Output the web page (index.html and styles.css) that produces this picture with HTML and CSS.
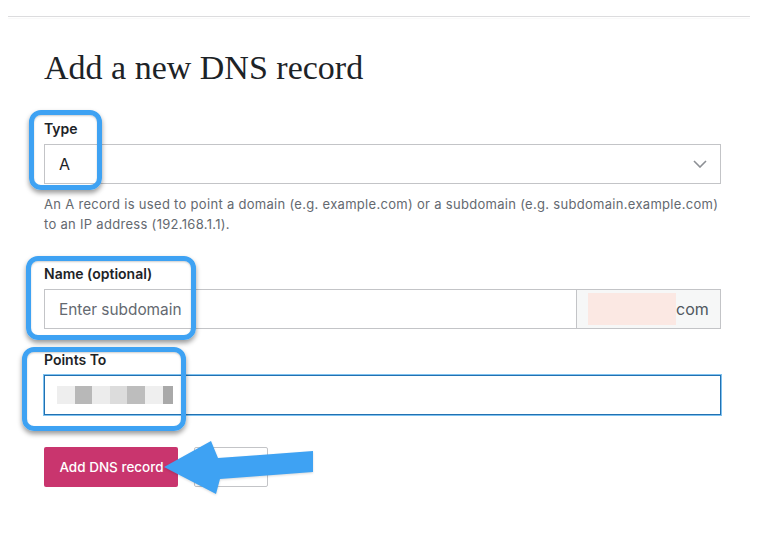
FILE: index.html
```html
<!DOCTYPE html>
<html lang="en">
<head>
<meta charset="utf-8">
<title>Add a new DNS record</title>
<link rel="stylesheet" href="styles.css">
</head>
<body>
<div class="topline"></div>
<main class="content">
  <h1 class="title">Add a new DNS record</h1>

  <div class="field">
    <label class="label">Type</label>
    <div class="select">
      <span class="select-value">A</span>
      <svg class="chevron" width="14" height="8" viewBox="0 0 14 8"><path d="M1 1 L7 7 L13 1" fill="none" stroke="#8c8f94" stroke-width="1.6"/></svg>
    </div>
    <p class="help">An A record is used to point a domain (e.g. example.com) or a subdomain (e.g. subdomain.example.com) to an IP address (192.168.1.1).</p>
  </div>

  <div class="field field-name">
    <label class="label">Name (optional)</label>
    <div class="input-group">
      <div class="input"><span class="placeholder">Enter subdomain</span></div>
      <div class="suffix"><span class="redact-pink"></span><span class="suffix-text">com</span></div>
    </div>
  </div>

  <div class="field field-points">
    <label class="label">Points To</label>
    <div class="input input-focus">
      <span class="pix p1"></span><span class="pix p2"></span><span class="pix p3"></span><span class="pix p4"></span><span class="pix p5"></span><span class="pix p6"></span><span class="pix p7"></span>
    </div>
  </div>

  <div class="actions">
    <button class="btn-primary">Add DNS record</button>
    <button class="btn-secondary">Cancel</button>
  </div>
</main>

<div class="mark mark-type"></div>
<div class="mark mark-name"></div>
<div class="mark mark-points"></div>
<svg class="arrow" width="170" height="70" viewBox="150 435 170 70">
  <polygon points="164,467 211,441 218,458 313,451 313,472 220,479 216,494" fill="#3ea2f3"/>
</svg>
</body>
</html>
```

FILE: styles.css
```css
* { box-sizing: border-box; }
body {
  margin: 0;
  background: #fff;
  font-family: Inter, "Noto Sans", sans-serif;
  color: #1d2327;
}
.topline {
  margin: 16px 10px 0 8px;
  border-top: 1px solid #dcdcde;
  box-shadow: 0 2px 1px rgba(0,0,0,0.03);
}
.content {
  width: 677px;
  margin-left: 44px;
}
.title {
  font-family: "Liberation Serif", serif;
  font-weight: 400;
  font-size: 34px;
  line-height: 40px;
  margin: 31px 0 31px;
  color: #1d2327;
}
.label {
  display: block;
  font-size: 14px;
  font-weight: 600;
  line-height: 20px;
  margin-bottom: 5px;
  color: #1d2327;
}
.select {
  height: 40px;
  border: 1px solid #c3c4c7;
  display: flex;
  align-items: center;
  justify-content: space-between;
  padding: 0 13px 0 14px;
}
.select-value { font-size: 16px; color: #1d2327; }
.help {
  margin: 10px 0 0;
  font-size: 13px;
  letter-spacing: 0.3px;
  line-height: 20px;
  color: #646970;
}
.field-name { margin-top: 30px; }
.field-points { margin-top: 21px; }
.input-group { display: flex; }
.input {
  height: 40px;
  border: 1px solid #c3c4c7;
  display: flex;
  align-items: center;
  padding: 0 14px;
  flex: 1;
}
.placeholder { font-size: 15.4px; color: #646970; }
.suffix {
  width: 145px;
  height: 40px;
  border: 1px solid #c3c4c7;
  margin-left: -1px;
  background: #f6f7f7;
  display: flex;
  align-items: center;
  padding-left: 11px;
}
.redact-pink {
  width: 88px;
  height: 32px;
  background: #fbe8e3;
}
.suffix-text { font-size: 16px; color: #50575e; }
.input-focus {
  border-color: #2271b1;
  box-shadow: 0 0 0 1px #7fc2f0;
  padding: 0 12px;
}
.pix { width: 17.6px; height: 18px; flex: none; }
.p1 { background: #eeeeee; }
.p2 { background: #b8b8b8; }
.p3 { background: #ececec; }
.p4 { background: #dcdcdc; }
.p5 { background: #bdbdbd; }
.p6 { background: #efefef; }
.p7 { background: #a9a9a9; width: 10px; }
.actions {
  display: flex;
  gap: 16px;
  margin-top: 32px;
}
.btn-primary {
  height: 40px;
  width: 134px;
  border: none;
  border-radius: 2px;
  background: #c9356e;
  color: #fff;
  font-family: Inter, "Noto Sans", sans-serif;
  font-size: 13.5px;
  font-weight: 500;
  padding: 0 0 0 1px;
}
.btn-secondary {
  height: 40px;
  width: 74px;
  border: 1px solid #c3c4c7;
  border-radius: 2px;
  background: #fff;
  color: #50575e;
  font-family: Inter, "Noto Sans", sans-serif;
  font-size: 13px;
}
.mark {
  position: absolute;
  border: 5px solid #3ea2f3;
  border-radius: 12px;
  box-shadow: 0 3px 5px rgba(0,0,0,0.4), inset 0 1px 2px rgba(0,0,0,0.2);
}
.mark-type { left: 29px; top: 110px; width: 73px; height: 80px; }
.mark-name { left: 26px; top: 256px; width: 170px; height: 84px; }
.mark-points { left: 22px; top: 347px; width: 164px; height: 84px; }
.arrow {
  position: absolute;
  left: 150px;
  top: 435px;
  filter: drop-shadow(0 1px 1px rgba(0,0,0,0.15));
}
```
